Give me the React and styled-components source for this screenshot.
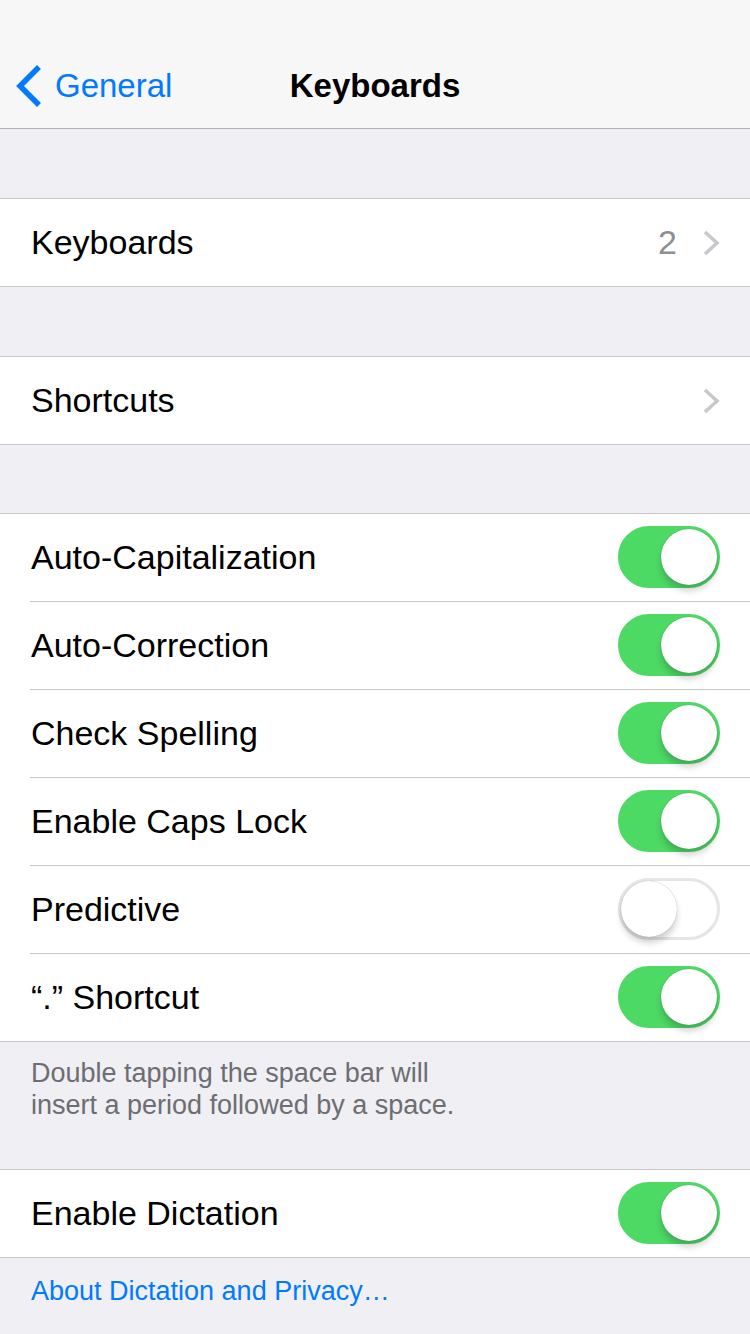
import React from 'react';
import styled, { createGlobalStyle } from 'styled-components';

const GlobalStyle = createGlobalStyle`
  html, body {
    margin: 0;
    padding: 0;
    background: #efeff4;
    font-family: "Liberation Sans", Arial, sans-serif;
    -webkit-font-smoothing: antialiased;
  }
  * { box-sizing: border-box; }
`

const Page = styled.div`
  width: 750px;
  min-height: 1334px;
  background: #efeff4;
`

const NavBar = styled.div`
  height: 129px;
  padding-top: 43px;
  background: #f7f7f7;
  border-bottom: 1px solid #b2b2b2;
  display: grid;
  grid-template-columns: 1fr auto 1fr;
  align-items: center;
`

const BackButton = styled.div`
  display: flex;
  align-items: center;
  padding-left: 16px;
  color: #007aff;
  font-size: 33px;
  svg {
    margin-right: 12px;
  }
`

const Title = styled.div`
  font-size: 33px;
  font-weight: 700;
  color: #000;
`

const Group = styled.div`
  margin-top: ${p => p.$top ?? 69}px;
  background: #fff;
  border-top: 1px solid #c8c7cc;
  border-bottom: 1px solid #c8c7cc;
`

const Row = styled.div`
  margin-left: 30px;
  padding: 0 30px 0 1px;
  height: 87px;
  display: flex;
  align-items: center;
  justify-content: space-between;
  font-size: 34px;
  color: #000;

  & + & {
    height: 88px;
    border-top: 1px solid #c8c7cc;
  }
`

const Accessory = styled.div`
  display: flex;
  align-items: center;
  gap: 26px;
  color: #8e8e93;
  font-size: 34px;
`

const Track = styled.div`
  position: relative;
  width: 102px;
  height: 62px;
  margin-top: -2px;
  border-radius: 31px;
  background: ${p => (p.$on ? '#4cd964' : '#fff')};
  border: 3px solid ${p => (p.$on ? '#4cd964' : '#e5e5e5')};
`

const Knob = styled.div`
  position: absolute;
  top: 0;
  left: ${p => (p.$on ? '40px' : '0')};
  width: 56px;
  height: 56px;
  border-radius: 50%;
  background: #fff;
  box-shadow: 0 6px 6px rgba(0, 0, 0, 0.18), 0 0 1px rgba(0, 0, 0, 0.35);
`

const Footer = styled.div`
  padding: 15px 30px 48px 31px;
  font-size: 27px;
  line-height: 32px;
  color: #6d6d72;
`

const Link = styled.div`
  padding: 17px 30px 0 31px;
  font-size: 27px;
  line-height: 32px;
  color: #007aff;
`

function Chevron() {
  return (
    <svg width="17" height="26" viewBox="0 0 17 26">
      <path d="M2 2 L14 13 L2 24" fill="none" stroke="#c7c7cc" strokeWidth="3.5" />
    </svg>
  )
}

function BackChevron() {
  return (
    <svg width="27" height="42" viewBox="0 0 27 42">
      <path d="M23 2 L4 21 L23 40" fill="none" stroke="#007aff" strokeWidth="5.5" />
    </svg>
  )
}

function Toggle({ on }) {
  return (
    <Track $on={on}>
      <Knob $on={on} />
    </Track>
  )
}

const switches = [
  ['Auto-Capitalization', true],
  ['Auto-Correction', true],
  ['Check Spelling', true],
  ['Enable Caps Lock', true],
  ['Predictive', false],
  ['\u201C.\u201D Shortcut', true],
]

export default function App() {
  return (
    <Page>
      <GlobalStyle />
      <NavBar>
        <BackButton>
          <BackChevron />
          General
        </BackButton>
        <Title>Keyboards</Title>
        <div />
      </NavBar>

      <Group>
        <Row>
          Keyboards
          <Accessory>
            2
            <Chevron />
          </Accessory>
        </Row>
      </Group>

      <Group>
        <Row>
          Shortcuts
          <Accessory>
            <Chevron />
          </Accessory>
        </Row>
      </Group>

      <Group $top={68}>
        {switches.map(([label, on]) => (
          <Row key={label}>
            {label}
            <Toggle on={on} />
          </Row>
        ))}
      </Group>

      <Footer>
        Double tapping the space bar will
        <br />
        insert a period followed by a space.
      </Footer>

      <Group $top={0}>
        <Row>
          Enable Dictation
          <Toggle on />
        </Row>
      </Group>

      <Link>About Dictation and Privacy…</Link>
    </Page>
  )
}
